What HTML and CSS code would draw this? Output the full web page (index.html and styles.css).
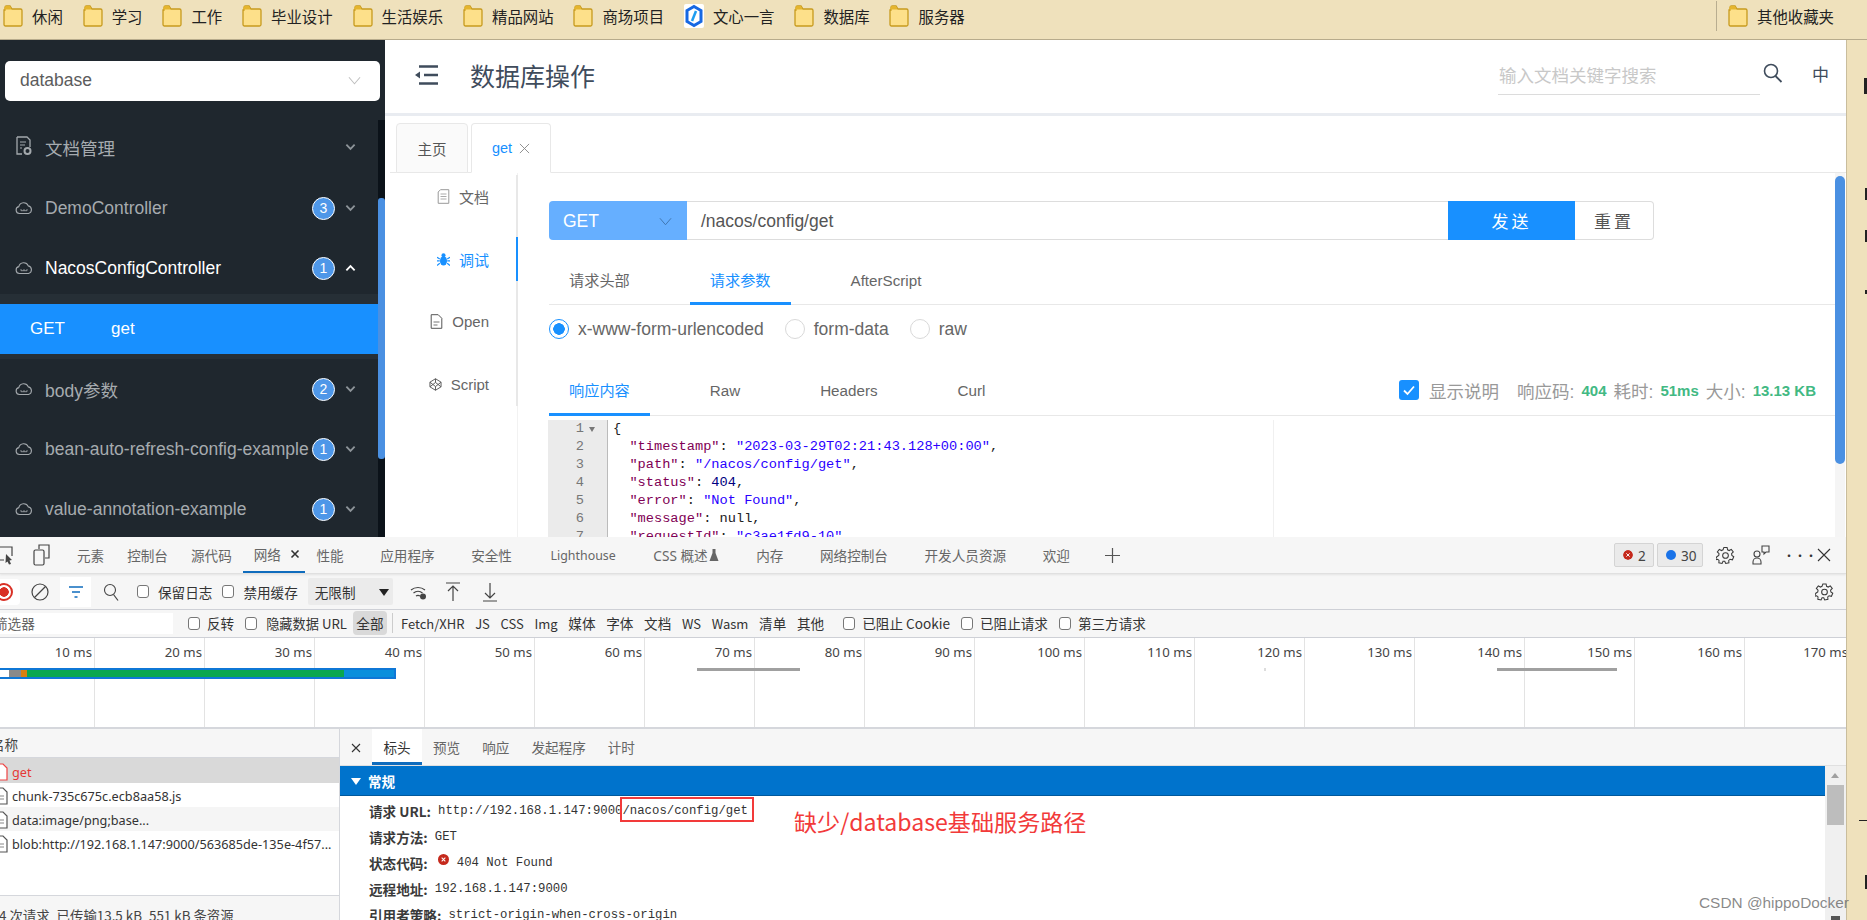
FILE: index.html
```html
<!DOCTYPE html>
<html lang="zh-CN">
<head>
<meta charset="utf-8">
<title>数据库操作</title>
<link rel="stylesheet" href="styles.css">
</head>
<body>
<svg class="defs" width="0" height="0" aria-hidden="true">
  <symbol id="folder" viewBox="0 0 20 24"><path d="M2 6V3.500A1.500 1.500 0 0 1 3.500 2H7l2 3h8.500A1.500 1.500 0 0 1 19 6.500v14a1.500 1.500 0 0 1-1.500 1.500h-15A1.500 1.500 0 0 1 1 20.500V6z" fill="#fde08a" stroke="#c79a1e" stroke-width="1.300"/><path d="M1.500 3.500A1.500 1.500 0 0 1 3 2h4l1.500 3.500H1.500z" fill="#e5b52e"/></symbol>
  <symbol id="cloud" viewBox="0 0 18 14"><path d="M4.500 12.500A3.500 3.500 0 0 1 3.800 5.600 5 5 0 0 1 13.300 4.900 3.900 3.900 0 0 1 13.500 12.500z" fill="none" stroke="#a4a9ad" stroke-width="1.100"/><path d="M6 9.700h6M6 8v1.700M9 8v1.700M12 8v1.700" stroke="#a4a9ad" stroke-width=".8" fill="none"/></symbol>
  <symbol id="chev-d" viewBox="0 0 12 8"><path d="M1.500 1.500 6 6l4.500-4.500" fill="none" stroke="#8d9499" stroke-width="2"/></symbol>
  <symbol id="gear" viewBox="0 0 20 20"><path d="M8.300 1.500h3.400l.5 2.500 1.700.8 2.200-1.300 2.100 2.800-1.800 1.800.3 1.900 2 1.300-1.400 3.200-2.500-.6-1.400 1.300.2 2.500-3.400.7-1-2.300h-1.800l-1 2.300-3.400-.7.2-2.500-1.400-1.300-2.500.6L.9 11.300l2-1.300.3-1.900L1.400 6.300l2.100-2.800 2.200 1.300 1.700-.8z" fill="none" stroke="#3a3a3a" stroke-width="1.100"/><circle cx="10" cy="10" r="3" fill="none" stroke="#3a3a3a" stroke-width="1.100"/></symbol>
  <symbol id="file" viewBox="0 0 14 18"><path d="M1 1h8l4 4v12H1z" fill="#fff" stroke="#555" stroke-width="1.200"/><path d="M4 9h6M4 12h6" stroke="#888"/></symbol>
  <symbol id="err" viewBox="0 0 12 12"><circle cx="6" cy="6" r="6" fill="#c5291c"/><path d="M4 4l4 4M8 4 4 8" stroke="#fff" stroke-width="1.100"/></symbol>
</svg>

<header class="bookmarks">
  <a class="bm"><svg class="bm-icon"><use href="#folder"/></svg>休闲</a>
  <a class="bm"><svg class="bm-icon"><use href="#folder"/></svg>学习</a>
  <a class="bm"><svg class="bm-icon"><use href="#folder"/></svg>工作</a>
  <a class="bm"><svg class="bm-icon"><use href="#folder"/></svg>毕业设计</a>
  <a class="bm"><svg class="bm-icon"><use href="#folder"/></svg>生活娱乐</a>
  <a class="bm"><svg class="bm-icon"><use href="#folder"/></svg>精品网站</a>
  <a class="bm"><svg class="bm-icon"><use href="#folder"/></svg>商场项目</a>
  <a class="bm"><svg class="bm-icon" viewBox="0 0 20 24"><rect width="20" height="24" rx="2" fill="#fff"/><path d="M10 2.500 17 6.500v11L10 21.500 3 17.500v-11z" fill="none" stroke="#1668e3" stroke-width="3"/><path d="M12 7 8 17" stroke="#1c9cf0" stroke-width="2.500"/></svg>文心一言</a>
  <a class="bm"><svg class="bm-icon"><use href="#folder"/></svg>数据库</a>
  <a class="bm"><svg class="bm-icon"><use href="#folder"/></svg>服务器</a>
  <a class="bm bm-other"><svg class="bm-icon"><use href="#folder"/></svg>其他收藏夹</a>
</header>

<div class="stage">
  <div class="window">
    <section class="app">
      <aside class="sidebar">
        <div class="picker"><span>database</span><svg class="picker-arrow" viewBox="0 0 14 9"><path d="M1 1l6 7 6-7" fill="none" stroke="#bfbfbf" stroke-width="1.100"/></svg></div>
        <nav class="menu">
          <div class="menu-item"><svg class="mi-icon mi-doc" viewBox="0 0 18 20"><path d="M2 1h10l3 3v7M7 18H2V1" fill="none" stroke="#a4a9ad" stroke-width="1.300"/><path d="M5 6h6M5 9h5M5 12h2" stroke="#a4a9ad" stroke-width="1.200"/><circle cx="12.500" cy="15" r="3" fill="none" stroke="#a4a9ad" stroke-width="2"/></svg><span class="mi-label">文档管理</span><svg class="chev"><use href="#chev-d"/></svg></div>
          <div class="menu-item"><svg class="mi-icon"><use href="#cloud"/></svg><span class="mi-label">DemoController</span><span class="badge">3</span><svg class="chev"><use href="#chev-d"/></svg></div>
          <div class="menu-item menu-open"><svg class="mi-icon"><use href="#cloud"/></svg><span class="mi-label">NacosConfigController</span><span class="badge">1</span><svg class="chev chev-up" viewBox="0 0 12 8"><path d="M1.500 6.500 6 2l4.500 4.500" fill="none" stroke="#fff" stroke-width="2"/></svg></div>
          <div class="submenu"><div class="sub-row"><span class="sub-method">GET</span><span>get</span></div></div>
          <div class="menu-item"><svg class="mi-icon"><use href="#cloud"/></svg><span class="mi-label">body参数</span><span class="badge">2</span><svg class="chev"><use href="#chev-d"/></svg></div>
          <div class="menu-item"><svg class="mi-icon"><use href="#cloud"/></svg><span class="mi-label">bean-auto-refresh-config-example</span><span class="badge">1</span><svg class="chev"><use href="#chev-d"/></svg></div>
          <div class="menu-item"><svg class="mi-icon"><use href="#cloud"/></svg><span class="mi-label">value-annotation-example</span><span class="badge">1</span><svg class="chev"><use href="#chev-d"/></svg></div>
        </nav>
        <div class="side-track"><div class="side-thumb"></div></div>
      </aside>

      <main class="page">
        <div class="topbar">
          <svg class="hamburger" viewBox="0 0 23 20"><path d="M4 1.500h19M9 10h14M4 18.500h19" stroke="#3f4c5c" stroke-width="2.400"/><path d="M0 10l5-3.500v7z" fill="#3f4c5c"/></svg>
          <h1 class="title">数据库操作</h1>
          <div class="search"><span class="search-ph">输入文档关键字搜索</span></div>
          <svg class="search-icon" viewBox="0 0 20 20"><circle cx="8" cy="8" r="6.500" fill="none" stroke="#3f4c5c" stroke-width="1.600"/><path d="M12.500 13l6 6" stroke="#3f4c5c" stroke-width="1.800"/></svg>
          <span class="lang">中</span>
        </div>
        <div class="workspace">
          <div class="page-tabs">
            <span class="page-tab">主页</span>
            <span class="page-tab page-tab-on"><b>get</b><svg class="tab-x" viewBox="0 0 12 12"><path d="M1 1l10 10M11 1 1 11" stroke="#888" stroke-width="1"/></svg></span>
          </div>
          <div class="body">
            <div class="nav-col">
              <div class="nav-list">
                <div class="nav-item"><svg class="nav-icon" viewBox="0 0 12 15"><path d="M3 .7h8.300v13.600H.7V3z" fill="none" stroke="#999"/><path d="M3 5h6M3 7.500h6M3 10h6" stroke="#aaa"/></svg>文档</div>
                <div class="nav-item nav-on"><svg class="nav-icon" viewBox="0 0 14 15"><ellipse cx="7" cy="9" rx="3.800" ry="5" fill="#1890ff"/><circle cx="7" cy="3" r="2.200" fill="#1890ff"/><path d="M0 5l3 2M14 5l-3 2M0 9h3M14 9h-3M0 14l3-2.500M14 14l-3-2.500" stroke="#1890ff" stroke-width="1.300"/></svg>调试</div>
                <div class="nav-item"><svg class="nav-icon" viewBox="0 0 12 15"><path d="M.7.7h7l3.600 3.600v10H.7z" fill="none" stroke="#555"/><path d="M3 8h6M3 11h4" stroke="#777"/></svg>Open</div>
                <div class="nav-item"><svg class="nav-icon" viewBox="0 0 14 14"><path d="M7 .8 13 4.500v5L7 13.200 1 9.500v-5zM7 .8v4M7 13.200v-4M1 4.500l6 4.700 6-4.700M1 9.500l6-4.700 6 4.700" fill="none" stroke="#555"/></svg>Script</div>
              </div>
            </div>
            <div class="content">
              <div class="request">
                <div class="method"><span>GET</span><svg class="method-arrow" viewBox="0 0 14 9"><path d="M1 1l6 7 6-7" fill="none" stroke="#3f74ad" stroke-width="1"/></svg></div>
                <div class="url">/nacos/config/get</div>
                <button class="btn-send">发送</button>
                <button class="btn-reset">重置</button>
              </div>
              <div class="tabline">
                <span class="tl-tab">请求头部</span><span class="tl-tab tl-on">请求参数</span><span class="tl-tab">AfterScript</span>
              </div>
              <div class="radios">
                <span class="radio radio-on"></span><span class="radio-label">x-www-form-urlencoded</span>
                <span class="radio"></span><span class="radio-label">form-data</span>
                <span class="radio"></span><span class="radio-label">raw</span>
              </div>
              <div class="tabline tabline-res">
                <span class="tl-tab tl-on">响应内容</span><span class="tl-tab">Raw</span><span class="tl-tab">Headers</span><span class="tl-tab">Curl</span>
                <div class="res-meta">
                  <span class="check"><svg viewBox="0 0 20 20"><path d="M5 10.500l3.500 3.500L15 6.500" fill="none" stroke="#fff" stroke-width="1.800"/></svg></span>
                  <span class="meta-show">显示说明</span>
                  <span class="meta-k meta-first">响应码:</span><span class="meta-v">404</span>
                  <span class="meta-k">耗时:</span><span class="meta-v">51ms</span>
                  <span class="meta-k">大小:</span><span class="meta-v">13.13 KB</span>
                </div>
              </div>
              <div class="editor">
                <div class="gutter"><div class="g-line">1<i class="fold"></i></div><div class="g-line">2</div><div class="g-line">3</div><div class="g-line">4</div><div class="g-line">5</div><div class="g-line">6</div><div class="g-line">7</div></div>
                <pre class="code">{
  <span class="k">"timestamp"</span>: <span class="s">"2023-03-29T02:21:43.128+00:00"</span>,
  <span class="k">"path"</span>: <span class="s">"/nacos/config/get"</span>,
  <span class="k">"status"</span>: <span class="n">404</span>,
  <span class="k">"error"</span>: <span class="s">"Not Found"</span>,
  <span class="k">"message"</span>: null,
  <span class="k">"requestId"</span>: <span class="s">"c3ae1fd9-10"</span></pre>
              </div>
            </div>
            <div class="page-track"><div class="page-thumb"></div></div>
          </div>
        </div>
      </main>
    </section>

    <section class="devtools">
      <div class="dt-bar">
        <svg class="dt-inspect" viewBox="0 0 14 20"><path d="M-6 2h18v9M4 15H-6V2" fill="none" stroke="#444" stroke-width="1.200"/><path d="M6 9l6 6-2.500.5L11 19l-2 .5-1.500-3-2 1.500z" fill="#444"/></svg>
        <svg class="dt-device" viewBox="0 0 17 22"><path d="M6 5V1h10v13h-4" fill="none" stroke="#444" stroke-width="1.200"/><rect x="1" y="6" width="10" height="15" rx="1.500" fill="none" stroke="#444" stroke-width="1.200"/></svg>
        <span class="dt-tab">元素</span><span class="dt-tab">控制台</span><span class="dt-tab">源代码</span>
        <span class="dt-tab dt-tab-on">网络<svg class="dt-x" viewBox="0 0 10 10"><path d="M1.500 1.500l7 7M8.500 1.500l-7 7" stroke="#333" stroke-width="1.600"/></svg></span>
        <span class="dt-tab dt-after">性能</span><span class="dt-tab dt-w">应用程序</span><span class="dt-tab dt-w">安全性</span><span class="dt-tab dt-w dt-lh">Lighthouse</span>
        <span class="dt-tab dt-w dt-css">CSS 概述<svg class="dt-flask" viewBox="0 0 10 12"><path d="M3.500 0h3v4l3 8H.5l3-8z" fill="#666"/></svg></span>
        <span class="dt-tab dt-w">内存</span><span class="dt-tab dt-w">网络控制台</span><span class="dt-tab dt-w">开发人员资源</span><span class="dt-tab dt-w">欢迎</span>
        <svg class="dt-plus" viewBox="0 0 16 16"><path d="M8 0v16M0 8h16" stroke="#555" stroke-width="1.300"/></svg>
        <div class="dt-right">
          <span class="pill pill-err"><svg class="dot"><use href="#err"/></svg>2</span>
          <span class="pill pill-msg"><i class="dot dot-b"></i>30</span>
          <svg class="dt-gear"><use href="#gear"/></svg>
          <svg class="dt-people" viewBox="0 0 18 20"><circle cx="5" cy="9" r="3" fill="none" stroke="#444" stroke-width="1.100"/><path d="M1 19v-2a4 4 0 0 1 8 0v2zM10 1h7v6h-3l-2 2V7h-2z" fill="none" stroke="#444" stroke-width="1.100"/></svg>
          <span class="dt-more">···</span>
          <svg class="dt-close" viewBox="0 0 14 14"><path d="M1 1l12 12M13 1 1 13" stroke="#333" stroke-width="1.100"/></svg>
        </div>
      </div>

      <div class="dt-toolbar">
        <span class="tool-rec"><i></i></span>
        <svg class="tool-block" viewBox="0 0 18 18"><circle cx="9" cy="9" r="8" fill="none" stroke="#444" stroke-width="1.200"/><path d="M3.500 14.500 14.500 3.500" stroke="#444" stroke-width="1.200"/></svg>
        <span class="tool-filter"><svg viewBox="0 0 14 14"><path d="M0 2h14M3 7h8M5.500 12h3" stroke="#0f6cbd" stroke-width="1.400"/></svg></span>
        <svg class="tool-search" viewBox="0 0 16 18"><circle cx="7" cy="7" r="5.500" fill="none" stroke="#444" stroke-width="1.100"/><path d="M10.500 11.500l4.500 6" stroke="#444" stroke-width="1.200"/></svg>
        <label class="cb cb-a"><i></i>保留日志</label>
        <label class="cb cb-b"><i></i>禁用缓存</label>
        <div class="throttle"><span>无限制</span><i class="caret"></i></div>
        <svg class="tool-wifi" viewBox="0 0 18 18"><path d="M1 7a11 11 0 0 1 14 0M3.500 10a7 7 0 0 1 9 0M6 13a3.500 3.500 0 0 1 4 0" fill="none" stroke="#444" stroke-width="1.200"/><circle cx="13" cy="13.500" r="3" fill="#444"/></svg>
        <svg class="tool-up" viewBox="0 0 14 20"><path d="M0 1h14M7 19V5M2 9l5-5 5 5" fill="none" stroke="#444" stroke-width="1.200"/></svg>
        <svg class="tool-down" viewBox="0 0 14 20"><path d="M0 19h14M7 1v14M2 11l5 5 5-5" fill="none" stroke="#444" stroke-width="1.200"/></svg>
        <svg class="tool-gear"><use href="#gear"/></svg>
      </div>

      <div class="dt-filter">
        <div class="filter-input">筛选器</div>
        <label class="cb f-c1"><i></i>反转</label>
        <label class="cb f-c2"><i></i>隐藏数据 URL</label>
        <span class="f-all">全部</span>
        <span class="f-sep"></span>
        <span class="f-type f-lat">Fetch/XHR</span><span class="f-type f-lat">JS</span><span class="f-type f-lat">CSS</span><span class="f-type f-lat">Img</span><span class="f-type">媒体</span><span class="f-type">字体</span><span class="f-type">文档</span><span class="f-type f-lat">WS</span><span class="f-type f-lat">Wasm</span><span class="f-type">清单</span><span class="f-type">其他</span>
        <label class="cb f-c3"><i></i>已阻止 Cookie</label>
        <label class="cb f-c4"><i></i>已阻止请求</label>
        <label class="cb f-c4"><i></i>第三方请求</label>
      </div>

      <div class="timeline">
        <div class="tick tick-first">10 ms</div><div class="tick">20 ms</div><div class="tick">30 ms</div><div class="tick">40 ms</div><div class="tick">50 ms</div><div class="tick">60 ms</div><div class="tick">70 ms</div><div class="tick">80 ms</div><div class="tick">90 ms</div><div class="tick">100 ms</div><div class="tick">110 ms</div><div class="tick">120 ms</div><div class="tick">130 ms</div><div class="tick">140 ms</div><div class="tick">150 ms</div><div class="tick">160 ms</div><div class="tick tick-last">170 ms</div>
        <div class="tl-bar"><i class="seg-w"></i><i class="seg-g"></i><i class="seg-o"></i><i class="seg-gr"></i><i class="seg-b"></i></div>
        <i class="tl-mark tl-mark-a"></i><i class="tl-mark tl-mark-b"></i><i class="tl-dot"></i>
      </div>

      <div class="panels">
        <div class="list">
          <div class="list-head">名称</div>
          <div class="list-row row-sel row-err"><svg class="row-icon" viewBox="0 0 14 18"><path d="M1 1h8l4 4v12H1z" fill="#fff" stroke="#e44" stroke-width="1.200"/></svg>get</div>
          <div class="list-row"><svg class="row-icon"><use href="#file"/></svg>chunk-735c675c.ecb8aa58.js</div>
          <div class="list-row row-alt"><svg class="row-icon"><use href="#file"/></svg>data:image/png;base...</div>
          <div class="list-row"><svg class="row-icon"><use href="#file"/></svg>blob:http://192.168.1.147:9000/563685de-135e-4f57...</div>
          <div class="list-foot"><span>4 次请求</span><span>已传输13.5 kB</span><span>551 kB 条资源</span></div>
        </div>
        <div class="detail">
          <div class="d-tabs">
            <svg class="d-x" viewBox="0 0 10 10"><path d="M1 1l8 8M9 1 1 9" stroke="#333" stroke-width="1.100"/></svg>
            <span class="d-tab d-on">标头</span><span class="d-tab">预览</span><span class="d-tab">响应</span><span class="d-tab">发起程序</span><span class="d-tab">计时</span>
          </div>
          <div class="d-body">
            <div class="d-main">
              <div class="d-section"><i class="tri"></i>常规</div>
              <div class="d-row"><b>请求 URL:</b><span class="d-url">http://192.168.1.147:9000/nacos/config/get</span></div>
              <div class="d-row"><b>请求方法:</b><span>GET</span></div>
              <div class="d-row"><b>状态代码:</b><svg class="status-dot"><use href="#err"/></svg><span>404 Not Found</span></div>
              <div class="d-row"><b>远程地址:</b><span>192.168.1.147:9000</span></div>
              <div class="d-row"><b>引用者策略:</b><span>strict-origin-when-cross-origin</span></div>
            </div>
            <div class="d-scroll"><i class="up"></i><div class="d-thumb"></div><i class="down"></i></div>
          </div>
        </div>
      </div>
    </section>
  </div>
  <div class="desk">
    <i class="desk-a"></i><i class="desk-b"></i><i class="desk-c"></i><i class="desk-d"></i><i class="desk-e"></i><i class="desk-f"></i>
  </div>
</div>

<div class="redbox"></div>
<div class="note">缺少/database基础服务路径</div>
<div class="watermark">CSDN @hippoDocker</div>
</body>
</html>
```

FILE: styles.css
```css
* { box-sizing: border-box; }
html, body { margin: 0; padding: 0; }
body {
  position: relative;
  width: 1867px;
  height: 920px;
  overflow: hidden;
  background: #efe1bc;
  font-family: "Liberation Sans", "Noto Sans CJK SC", sans-serif;
  color: #333;
}
.defs { position: absolute; }
i { display: block; font-style: normal; }

/* bookmarks */
.bookmarks {
  display: flex;
  align-items: center;
  height: 40px;
  padding: 0 0 7px 3px;
  background: #efe1bc;
  border-bottom: 1px solid #b7ab8c;
  font-family: "Noto Sans CJK SC", sans-serif;
  font-size: 15.400px;
  color: #222;
}
.bm { display: flex; align-items: center; gap: 9px; margin-right: 19.900px; }
.bm-icon { width: 20px; height: 24px; flex: none; }
.bm-other {
  margin: 0 33px 0 auto;
  padding-left: 11px;
  border-left: 1px solid #b8ad90;
  height: 30px;
}

/* frame */
.stage { display: flex; height: 880px; }
.window { width: 1847px; flex: none; display: flex; flex-direction: column; border-right: 1px solid #c9bd9d; }
.desk { flex: 1; position: relative; }
.desk i { position: absolute; background: #222; }
.desk-a { left: 17px; top: 38px; width: 3px; height: 16px; }
.desk-b { left: 18px; top: 148px; width: 2px; height: 12px; }
.desk-c { left: 18px; top: 190px; width: 2px; height: 12px; }
.desk-d { left: 18px; top: 250px; width: 2px; height: 4px; }
.desk-e { left: 12px; top: 780px; width: 8px; height: 1px; background: #a9a081; }
.desk-f { left: 18px; top: 835px; width: 2px; height: 14px; }

/* app */
.app { display: flex; height: 497px; flex: none; background: #fff; overflow: hidden; }
.sidebar { position: relative; width: 385px; flex: none; background: #1f272e; color: #a6abaf; font-size: 17.500px; }
.picker {
  display: flex;
  align-items: center;
  justify-content: space-between;
  width: 375px;
  height: 40px;
  margin: 21px 0 17px 5px;
  padding: 0 19px 2px 15px;
  background: #fff;
  border-radius: 5px;
  color: #5c5c5c;
  font-size: 17.500px;
}
.picker-arrow { width: 13px; height: 9px; }
.menu-item { display: flex; align-items: center; height: 60px; padding: 0 29px 0 15px; }
.menu-open { height: 56px; color: #fff; padding-top: 4px; }
.mi-icon { width: 18px; height: 16px; margin-right: 12px; flex: none; }
.mi-doc { height: 20px; margin-bottom: 2px; }
.mi-label { flex: 1; white-space: nowrap; }
.menu-item:first-child { padding-bottom: 2px; }
.badge {
  display: flex;
  align-items: center;
  justify-content: center;
  width: 23px;
  height: 23px;
  border: 1.500px solid #fff;
  border-radius: 50%;
  background: #4e97e8;
  color: #fff;
  font-size: 14px;
  flex: none;
}
.chev { width: 11px; height: 8px; margin-left: 10px; flex: none; }
.chev-up { height: 8px; }
.submenu { padding: 10px 0 5px; background: #262f36; }
.sub-row { display: flex; align-items: center; height: 50px; padding-left: 30px; background: #1890ff; color: #fff; font-size: 17px; }
.sub-method { width: 81px; }
.side-track { position: absolute; right: 0; top: 80px; bottom: 0; width: 7px; background: #0b1219; }
.side-thumb { margin-top: 78px; height: 261px; background: #4a90e2; border-radius: 3px; }

.page { flex: 1; display: flex; flex-direction: column; min-width: 0; }
.topbar { display: flex; align-items: center; height: 76px; flex: none; padding: 0 17px 4px 30px; border-bottom: 3px solid #e9ecf1; color: #3f4c5c; }
.hamburger { width: 23px; height: 20px; flex: none; }
.title { margin: 0 0 0 32px; font-size: 25px; font-weight: 400; flex: 1; white-space: nowrap; }
.search { width: 262px; height: 40px; padding: 7px 0 0 1px; border-bottom: 1px solid #dcdcdc; color: #c8c8c8; font-size: 17.500px; flex: none; }
.search-icon { width: 20px; height: 20px; margin: 0 0 3px 3px; flex: none; }
.lang { margin: 0 0 3px 29px; font-size: 17px; }

.workspace { flex: 1; display: flex; flex-direction: column; margin-left: 5px; min-height: 0; }
.page-tabs { display: flex; gap: 3px; height: 57px; padding: 7px 0 0 6px; border-bottom: 1px solid #e8e8e8; flex: none; }
.page-tab {
  display: flex;
  align-items: center;
  justify-content: center;
  width: 72px;
  height: 50px;
  border: 1px solid #e8e8e8;
  border-radius: 4px 4px 0 0;
  background: #fafafa;
  color: #555;
  font-size: 14.500px;
}
.page-tab-on { width: 80px; background: #fff; border-bottom-color: #fff; color: #1890ff; gap: 7px; }
.page-tab-on b { font-weight: 400; }
.tab-x { width: 11px; height: 11px; }
.body { flex: 1; display: flex; min-height: 0; overflow: hidden; }
.nav-col { width: 128px; flex: none; padding-top: 2px; border-right: 1px solid #f2f2f2; }
.nav-list { display: flex; flex-direction: column; gap: 18.500px; height: 231px; margin-right: -1px; border-right: 2px solid #e8e8e8; }
.nav-item { display: flex; align-items: center; justify-content: flex-end; gap: 9px; height: 44px; margin-right: -2px; padding-right: 27px; font-size: 15px; color: #666; border-right: 2px solid transparent; }
.nav-on { color: #1890ff; border-right-color: #1890ff; }
.nav-icon { width: 13px; height: 15px; flex: none; }
.content { width: 1317px; flex: none; padding: 28px 0 0 31px; overflow: hidden; }
.request { display: flex; width: 1105px; height: 39px; }
.method { display: flex; align-items: center; justify-content: space-between; width: 138px; padding: 2px 15px 0 14px; background: #66afff; border-radius: 4px 0 0 4px; color: #fff; font-size: 17.500px; }
.method-arrow { width: 13px; height: 9px; }
.url { flex: 1; padding: 0 14px; line-height: 39px; border: solid #ddd; border-width: 1px 0; color: #555; font-size: 17.500px; }
.btn-send, .btn-reset { font-family: inherit; font-size: 17px; letter-spacing: 3px; padding: 0; }
.btn-send { width: 127px; border: 0; background: #1890ff; color: #fff; }
.btn-reset { width: 79px; background: #fff; border: 1px solid #ddd; border-left: 0; border-radius: 0 4px 4px 0; color: #555; }
.tabline { display: flex; gap: 40px; height: 45px; margin-top: 20px; border-bottom: 1px solid #e8e8e8; font-size: 15.200px; color: #666; align-items: stretch; }
.tl-tab { padding: 7px 20px 0; margin-bottom: -1px; white-space: nowrap; line-height: 28px; border-bottom: 3px solid transparent; }
.tl-on { color: #1890ff; border-bottom-color: #1890ff; }
.radios { display: flex; align-items: center; height: 50px; font-size: 17.500px; color: #666; padding-bottom: 2px; }
.radio { width: 20px; height: 20px; border: 1px solid #d9d9d9; border-radius: 50%; margin-right: 9px; flex: none; }
.radio-on { border: 1.500px solid #1890ff; background: radial-gradient(circle, #1890ff 0 5.500px, #fff 6px); }
.radio-label { margin-right: 21px; }
.tabline-res { margin-top: 12px; height: 49px; padding-right: 19px; }
.tabline-res .tl-tab { padding-top: 10px; }
.res-meta { display: flex; align-items: center; margin-left: auto; padding-bottom: 2px; font-size: 17.500px; color: #999; white-space: nowrap; }
.check { width: 20px; height: 20px; border-radius: 3px; background: #1890ff; margin-right: 10px; }
.check svg { display: block; width: 20px; height: 20px; }
.meta-first { margin-left: 18px; }
.meta-k { margin-right: 7px; }
.meta-v { margin-right: 7px; color: #42b983; font-weight: 700; font-size: 15px; }
.meta-v:last-child { margin-right: 0; }
.editor { display: flex; width: 1287px; margin: 4px 0 0 -1px; height: 118px; overflow: hidden; font-family: "Liberation Mono", monospace; font-size: 13.670px; line-height: 18px; }
.gutter { width: 60px; flex: none; background: #ebebeb; border-right: 1px solid #bbb; color: #777; text-align: right; padding-right: 23px; }
.g-line { position: relative; height: 18px; }
.fold { position: absolute; left: 100%; top: 7px; margin-left: 5px; border: 3px solid transparent; border-top: 5px solid #777; border-bottom: 0; width: 0; }
.code { margin: 0; width: 666px; padding-left: 5px; border-right: 1px solid #f0f0f0; font: inherit; color: #222; white-space: pre; overflow: hidden; }
.k { color: #7f0055; }
.s { color: #2a00ff; }
.n { color: #000080; }
.page-track { width: 10px; background: #f5f5f5; flex: none; }
.page-thumb { height: 288px; margin-top: 3px; background: #4a90e2; border-radius: 5px; }

/* devtools */
.devtools { flex: 1; min-height: 0; display: flex; flex-direction: column; background: #f6f6f6; font-family: "Noto Sans CJK SC", sans-serif; font-size: 13.600px; color: #333; overflow: hidden; }
.dt-bar { display: flex; align-items: center; height: 37px; flex: none; border-bottom: 1px solid #e0e0e0; box-shadow: 0 1px 2px rgba(0,0,0,.08); color: #666; white-space: nowrap; }
.dt-inspect { width: 14px; height: 20px; margin-right: 19px; flex: none; }
.dt-device { width: 17px; height: 22px; margin-right: 15.500px; flex: none; }
.dt-tab { display: flex; align-items: center; height: 36px; padding: 0 11.500px 0; }
.dt-tab-on { position: relative; padding: 0 5px 0 10.500px; border-bottom: 2px solid #0f6cbd; }
.dt-x { width: 10px; height: 10px; margin-left: 9px; }
.dt-after { padding-right: 18.300px; }
.dt-w { padding: 0 18.300px; font-family: "Noto Sans", "Noto Sans CJK SC", sans-serif; }
.dt-lh { margin: 0 1px 0 2px; font-size: 12.400px; }
.dt-css { margin-right: 1px; }
.dt-flask { width: 10px; height: 12px; margin-left: 1px; }
.dt-plus { width: 15px; height: 15px; margin-left: 17px; }
.dt-right { display: flex; align-items: center; margin-left: auto; padding-right: 15px; }
.pill { display: flex; align-items: center; height: 24px; padding: 0 5px; gap: 5px; background: #eaeaea; border: 1px solid #d4d4d4; border-radius: 2px; font-size: 13.600px; color: #444; font-family: "Noto Sans", sans-serif; }
.pill-err { width: 40px; margin-right: 3px; padding-left: 8px; }
.pill-msg { width: 46px; padding-left: 8px; }
.dot { width: 10px; height: 10px; border-radius: 50%; flex: none; }
.dot-b { background: #1a73e8; }
.dt-gear { width: 19px; height: 21px; margin-left: 13px; }
.dt-people { width: 18px; height: 20px; margin-left: 17px; }
.dt-more { width: 18px; margin-left: 13px; text-align: center; letter-spacing: -1px; color: #333; font-size: 12px; }
.dt-close { width: 14px; height: 14px; margin-left: 16px; }

.dt-toolbar { display: flex; align-items: center; height: 35px; margin-top: 1px; padding-bottom: 1px; flex: none; border-bottom: 1px solid #ced0d6; white-space: nowrap; }
.tool-rec { display: flex; align-items: center; justify-content: center; width: 21px; height: 26px; flex: none; background: #fff; margin-left: -1px; border-radius: 0 4px 4px 0; }
.tool-rec i { width: 18px; height: 18px; border: 2px solid #d93025; border-radius: 50%; margin-left: -12px; background: radial-gradient(circle, #d93025 0 4.500px, #fff 5px); }
.tool-block { width: 18px; height: 18px; margin-left: 11px; flex: none; }
.tool-filter { display: flex; align-items: center; justify-content: center; width: 31px; height: 30px; margin-left: 11px; background: #fff; flex: none; }
.tool-filter svg { width: 14px; height: 14px; }
.tool-search { width: 16px; height: 18px; margin-left: 12px; flex: none; }
.cb { display: flex; align-items: center; gap: 7px; white-space: nowrap; }
.cb i { width: 12px; height: 13px; border: 1px solid #777; border-radius: 3px; background: #fff; flex: none; }
.cb-a { margin-left: 18px; gap: 9px; }
.cb-b { margin-left: 10px; gap: 9px; }
.throttle { position: relative; display: flex; align-items: center; width: 85px; height: 27px; margin-left: 10px; padding-left: 7px; background: #ebebeb; border-radius: 2px; flex: none; }
.caret { position: absolute; right: 4px; top: 11px; border: 5px solid transparent; border-top: 7px solid #222; border-bottom: 0; }
.tool-wifi { width: 18px; height: 18px; margin-left: 17px; flex: none; }
.tool-up { width: 14px; height: 20px; margin-left: 18px; flex: none; }
.tool-down { width: 14px; height: 20px; margin-left: 23px; flex: none; }
.tool-gear { width: 19px; height: 20px; margin-left: auto; margin-right: 12px; flex: none; }

.dt-filter { display: flex; align-items: center; height: 28px; padding-bottom: 1px; flex: none; border-bottom: 1px solid #ced0d6; white-space: nowrap; }
.filter-input { width: 173px; height: 21px; line-height: 21px; background: #fff; text-indent: -6px; overflow: hidden; color: #666; flex: none; }
.f-c1 { margin-left: 15px; }
.f-c2 { margin-left: 11px; gap: 9px; font-size: 13.200px; }
.f-c3 { margin-left: 8.400px; }
.f-c4 { margin-left: 11px; }
.f-all { width: 34px; height: 24px; line-height: 24px; margin-left: 6px; text-align: center; background: #d9d9d9; border-radius: 4px; flex: none; }
.f-sep { width: 1px; height: 20px; margin: 0 8px 0 5px; background: #ccc; flex: none; }
.f-type { margin-right: 10.700px; }
.f-lat { font-size: 13px; }

.timeline { position: relative; display: flex; height: 91px; flex: none; background: #fff; border-bottom: 2px solid #d5d7dc; overflow: hidden; }
.tick { width: 110px; flex: none; padding: 5px 2px 0 0; text-align: right; font-family: "Noto Sans", sans-serif; font-size: 13.200px; color: #444; border-right: 1px solid #e3e3e3; white-space: nowrap; }
.tick-first { width: 95px; }
.tick-last { width: 103px; border-right: 0; padding-right: 0; }
.tl-bar { position: absolute; left: 0; top: 30px; display: flex; width: 396px; height: 11px; border: 2px solid #0f77d6; border-left: 0; }
.tl-bar i { height: 100%; }
.seg-w { width: 9px; background: #fff; }
.seg-g { width: 12px; background: #8a8a8a; }
.seg-o { width: 6px; background: #d9800f; }
.seg-gr { width: 317px; background: #0aa74f; }
.seg-b { flex: 1; background: #0a8fdc; }
.tl-mark { position: absolute; top: 30px; height: 3px; background: #a0a0a0; }
.tl-mark-a { left: 697px; width: 103px; }
.tl-mark-b { left: 1497px; width: 120px; }
.tl-dot { position: absolute; left: 1264px; top: 30px; width: 2px; height: 3px; background: #ddd; }

.panels { flex: 1; display: flex; min-height: 0; }
.list { position: relative; width: 340px; flex: none; background: #fff; border-right: 1px solid #d5d7dc; font-family: "Noto Sans", "Noto Sans CJK SC", sans-serif; font-size: 12.700px; white-space: nowrap; overflow: hidden; }
.list-head { height: 29px; line-height: 30px; margin-left: -9px; background: #f6f6f6; border-bottom: 1px solid #d5d7dc; font-family: "Noto Sans CJK SC", sans-serif; font-size: 13.600px; color: #444; }
.list-row { display: flex; align-items: center; gap: 4px; height: 24px; margin-left: -6px; padding: 2px 6px 0 0; color: #333; }
.row-sel { height: 25px; background: #d9d9d9; width: 346px; color: #e53935; }
.row-alt { background: #f5f5f5; width: 346px; }
.row-icon { width: 14px; height: 18px; flex: none; }
.list-foot { position: absolute; left: -1px; right: 0; top: 166px; display: flex; gap: 7px; height: 26px; padding-top: 8px; line-height: 22px; background: #f6f6f6; border-top: 1px solid #d5d7dc; font-family: "Noto Sans CJK SC", sans-serif; font-size: 13.400px; color: #444; }
.detail { flex: 1; display: flex; flex-direction: column; min-width: 0; }
.d-tabs { display: flex; align-items: flex-end; height: 37px; padding-left: 11px; flex: none; background: #f6f6f6; color: #666; border-bottom: 1px solid #e0e0e0; }
.d-x { width: 10px; height: 10px; margin: 0 11px 12px 0; }
.d-tab { height: 36px; line-height: 36px; padding: 0 11px; }
.d-on { background: #fff; color: #333; border-bottom: 3px solid #0f6cbd; width: 50px; text-align: center; }
.d-body { flex: 1; display: flex; min-height: 0; background: #fff; }
.d-main { flex: 1; min-width: 0; }
.d-section { display: flex; align-items: center; gap: 7px; height: 30px; margin-bottom: 2px; padding-left: 11px; background: #0073cc; border-bottom: 1px solid #00589c; color: #fff; font-weight: 700; font-size: 13.600px; }
.tri { border: 5px solid transparent; border-top: 7px solid #fff; border-bottom: 0; margin-top: 1px; }
.d-row { display: flex; align-items: center; height: 26px; padding-left: 29px; font-family: "Liberation Mono", monospace; font-size: 12.300px; color: #333; white-space: nowrap; }
.d-row b { font-family: "Noto Sans CJK SC", sans-serif; font-size: 13.600px; font-weight: 700; color: #3a3a3a; margin-right: 7px; }
.status-dot { width: 11px; height: 11px; margin: -7px 8px 0 3px; flex: none; }
.d-scroll { position: relative; width: 21px; flex: none; background: #f0f0f0; }
.up { position: absolute; left: 6px; top: 7px; border: 4.500px solid transparent; border-bottom: 5px solid #a0a0a0; border-top: 0; }
.down { position: absolute; left: 6px; bottom: -1px; width: 9px; height: 5px; background: #555; }
.d-thumb { position: absolute; left: 2px; top: 19px; width: 17px; height: 40px; background: #bdbdbd; }

/* overlays */
.redbox { position: absolute; left: 620px; top: 797px; width: 134px; height: 25px; border: 2.500px solid #f23a3a; }
.note { position: absolute; left: 794px; top: 807px; font-size: 23.100px; line-height: 28px; color: #f23a3a; font-family: "Noto Sans CJK SC", sans-serif; white-space: nowrap; }
.watermark { position: absolute; left: 1699px; top: 894px; font-size: 15.400px; line-height: 18px; color: rgba(90,90,90,.72); white-space: nowrap; }
```
